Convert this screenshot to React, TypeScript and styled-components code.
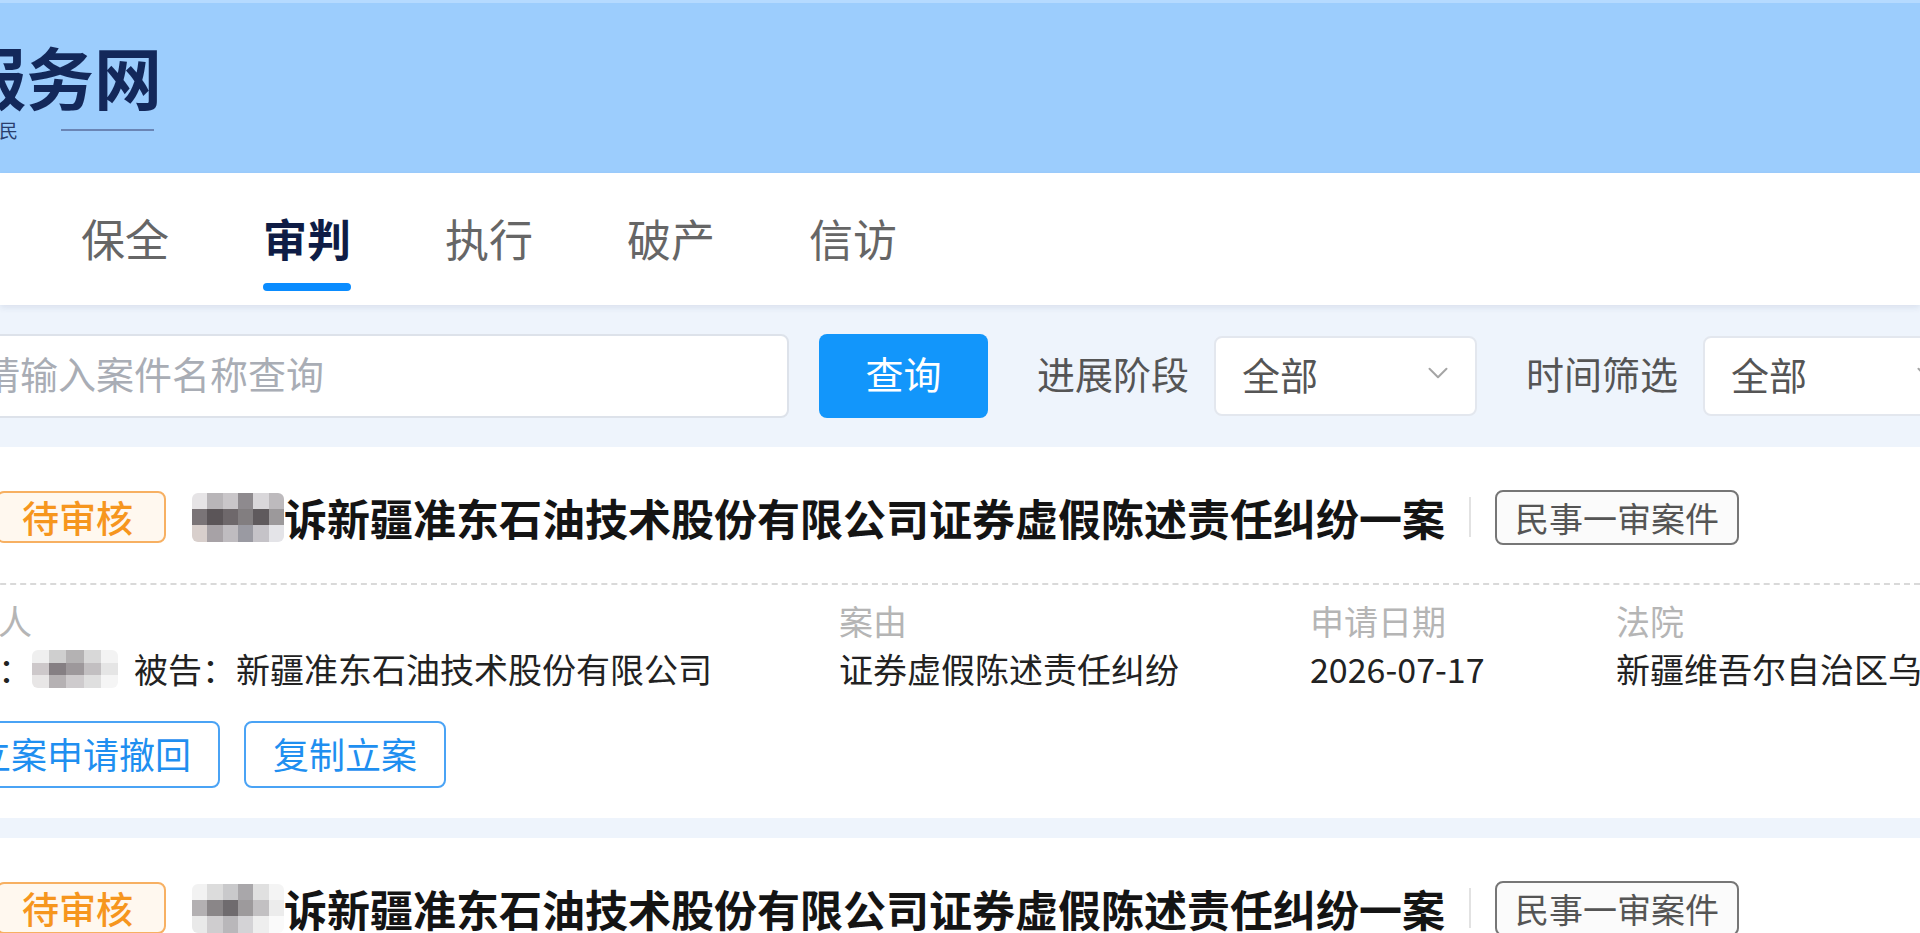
import styled, { createGlobalStyle } from 'styled-components';
import { ChevronDown } from 'lucide-react';

const GlobalStyle = createGlobalStyle`
  html, body {
    margin: 0;
    padding: 0;
  }
  body {
    background: #eef4fc;
    font-family: "Noto Sans CJK SC", "Noto Sans", sans-serif;
    overflow: hidden;
  }
  * {
    box-sizing: border-box;
  }
`;

const Page = styled.div`
  width: 1920px;
  height: 933px;
  overflow: hidden;
  background: #eef4fc;
`;

/* ---------- header ---------- */

const Header = styled.header`
  height: 173px;
  background: #9ccdfd;
  border-top: 3px solid #b5daff;
  padding-top: 36px;
  overflow: hidden;
`;

const Brand = styled.div`
  margin-left: -178px;
`;

const BrandName = styled.div`
  font-size: 68px;
  line-height: 74px;
  font-weight: 700;
  color: #13285a;
  white-space: nowrap;
`;

const Slogan = styled.div`
  display: flex;
  align-items: center;
  gap: 35px;
  margin-top: 6px;
  margin-left: 96px;
`;

const Motto = styled.span`
  font-size: 19px;
  line-height: 22px;
  letter-spacing: 8px;
  color: #2a3f6e;
`;

const Rule = styled.span`
  width: 93px;
  height: 2px;
  background: #6a85b5;
`;

/* ---------- tabs ---------- */

const Nav = styled.nav`
  position: relative;
  z-index: 1;
  height: 132px;
  display: flex;
  gap: 94px;
  padding-left: 81px;
  background: #fff;
  box-shadow: 0 3px 6px rgba(30, 60, 110, 0.09);
`;

const Tab = styled.div<{ $active?: boolean }>`
  position: relative;
  padding-top: 38px;
  font-size: 44px;
  line-height: 54px;
  font-weight: ${(p) => (p.$active ? 700 : 400)};
  color: ${(p) => (p.$active ? '#0e1c45' : '#666')};

  &::after {
    content: '';
    display: ${(p) => (p.$active ? 'block' : 'none')};
    position: absolute;
    left: 0;
    right: 0;
    bottom: 14px;
    height: 8px;
    border-radius: 4px;
    background: #0a8cff;
  }
`;

/* ---------- filters ---------- */

const FilterBar = styled.div`
  height: 142px;
  display: flex;
  align-items: center;
  margin-left: -42px;
  white-space: nowrap;
`;

const SearchInput = styled.input`
  width: 831px;
  height: 84px;
  flex-shrink: 0;
  padding: 0 22px 8px;
  border: 2px solid #dde2ea;
  border-radius: 8px;
  background: #fff;
  font-family: inherit;
  font-size: 38px;
  color: #333;
  outline: none;

  &::placeholder {
    color: #a9adb5;
  }
`;

const SearchButton = styled.button`
  width: 169px;
  height: 84px;
  flex-shrink: 0;
  margin-left: 30px;
  padding-bottom: 8px;
  border: none;
  border-radius: 8px;
  background: #1296fb;
  color: #fff;
  font-family: inherit;
  font-size: 38px;
`;

const FilterLabel = styled.span`
  flex-shrink: 0;
  margin-left: 49px;
  margin-right: 25px;
  padding-bottom: 8px;
  font-size: 38px;
  color: #555;
`;

const Select = styled.div`
  width: 263px;
  height: 80px;
  flex-shrink: 0;
  display: flex;
  align-items: center;
  justify-content: space-between;
  padding: 0 20px 6px 26px;
  border: 2px solid #e3e7ee;
  border-radius: 8px;
  background: #fff;
  font-size: 38px;
  color: #555;

  svg {
    color: #a5a5a5;
  }
`;

/* ---------- case cards ---------- */

const Card = styled.section`
  background: #fff;
  padding: 42px 0 30px;

  & + & {
    margin-top: 20px;
  }
`;

const CardInner = styled.div`
  margin-left: -70px;
`;

const HeadRow = styled.div`
  display: flex;
  align-items: center;
  padding-left: 66px;
  white-space: nowrap;
`;

const StatusTag = styled.span`
  height: 52px;
  display: flex;
  align-items: center;
  padding: 0 31px 0 24px;
  border: 2px solid #f7b062;
  border-radius: 8px;
  background: #fff8ef;
  color: #f6961e;
  font-size: 37px;
  font-weight: 500;
`;

const Mosaic = styled.span<{ $cols: number; $w: number; $h: number; $gap?: number }>`
  display: grid;
  grid-template-columns: repeat(${(p) => p.$cols}, 1fr);
  width: ${(p) => p.$w}px;
  height: ${(p) => p.$h}px;
  flex-shrink: 0;
  margin-left: ${(p) => p.$gap ?? 0}px;
  border-radius: 6px;
  overflow: hidden;
  filter: blur(0.7px);
`;

const Tile = styled.span<{ $c: string }>`
  background: ${(p) => p.$c};
`;

const CaseTitle = styled.h2`
  margin: 0;
  font-size: 43px;
  line-height: 56px;
  font-weight: 700;
  color: #141414;
`;

const Divider = styled.span`
  width: 2px;
  height: 40px;
  margin: 0 24px;
  background: #e2e2e2;
`;

const TypeTag = styled.span`
  height: 55px;
  display: flex;
  align-items: center;
  padding: 0 18px;
  border: 2px solid #767676;
  border-radius: 8px;
  background: #fbfbfb;
  color: #555;
  font-size: 34px;
`;

const Dashed = styled.div`
  margin-top: 38px;
  border-top: 2px dashed #d9d9d9;
`;

const InfoGrid = styled.div`
  display: grid;
  grid-template-columns: 909px 471px 306px 1fr;
  margin-top: 12px;
  white-space: nowrap;
  font-size: 34px;
  line-height: 48px;
`;

const InfoCell = styled.div`
  display: flex;
  flex-direction: column;
  min-width: 0;
`;

const InfoLabel = styled.span`
  color: #b5b5b5;
`;

const InfoValue = styled.span`
  display: flex;
  align-items: center;
  color: #222;
`;

const Party = styled.span`
  margin-left: 16px;
`;

const Actions = styled.div`
  display: flex;
  gap: 24px;
  margin-top: 28px;
  padding-left: 16px;
`;

const ActionButton = styled.button`
  height: 67px;
  padding: 0 27px 4px;
  border: 2px solid #4aa3f5;
  border-radius: 8px;
  background: #fff;
  color: #1f8ff0;
  font-family: inherit;
  font-size: 36px;
  white-space: nowrap;
`;

type Blur = { cols: number; w: number; h: number; tiles: string[] };

const titleBlurA: Blur = {
  cols: 6,
  w: 92,
  h: 49,
  tiles: [
    '#e6e4e6', '#b8b5b8', '#c9c6c9', '#8e8a8e', '#d9d7da', '#bdbabd',
    '#7a7477', '#5b5558', '#6e686b', '#827e80', '#5f5a5d', '#9c999b',
    '#d8cfcc', '#a7a2a6', '#bfbcc0', '#9a9aa2', '#c5c3c8', '#e4e4e8',
  ],
};

const titleBlurB: Blur = {
  cols: 6,
  w: 92,
  h: 49,
  tiles: [
    '#f2f2f2', '#dcdcdc', '#c9c9cb', '#a9a7aa', '#e0e0e0', '#f4f4f4',
    '#b3b0b2', '#8a8688', '#6f6b6e', '#9d9a9c', '#c2c0c2', '#ececec',
    '#e9e9e9', '#cfcdcf', '#b9b7ba', '#d4d3d6', '#eeeeee', '#fafafa',
  ],
};

const nameBlur: Blur = {
  cols: 5,
  w: 86,
  h: 38,
  tiles: [
    '#efefef', '#cfcfcf', '#b4b2b3', '#d8d8d8', '#f3f3f3',
    '#cdc8ca', '#857f83', '#9d989b', '#c2bfc1', '#e5e5e5',
    '#e8e6e6', '#b5b1b3', '#cecbcd', '#dfdfdf', '#f5f5f5',
  ],
};

const Pixelated = ({ blur, gap }: { blur: Blur; gap?: number }) => (
  <Mosaic $cols={blur.cols} $w={blur.w} $h={blur.h} $gap={gap}>
    {blur.tiles.map((c, i) => (
      <Tile key={i} $c={c} />
    ))}
  </Mosaic>
);

const tabs = ['保全', '审判', '执行', '破产', '信访'];

const CaseCard = ({ blur }: { blur: Blur }) => (
  <Card>
    <CardInner>
      <HeadRow>
        <StatusTag>待审核</StatusTag>
        <Pixelated blur={blur} gap={26} />
        <CaseTitle>诉新疆准东石油技术股份有限公司证券虚假陈述责任纠纷一案</CaseTitle>
        <Divider />
        <TypeTag>民事一审案件</TypeTag>
      </HeadRow>
      <Dashed />
      <InfoGrid>
        <InfoCell>
          <InfoLabel>当事人</InfoLabel>
          <InfoValue>
            原告：
            <Pixelated blur={nameBlur} />
            <Party>被告：新疆准东石油技术股份有限公司</Party>
          </InfoValue>
        </InfoCell>
        <InfoCell>
          <InfoLabel>案由</InfoLabel>
          <InfoValue>证券虚假陈述责任纠纷</InfoValue>
        </InfoCell>
        <InfoCell>
          <InfoLabel>申请日期</InfoLabel>
          <InfoValue>2026-07-17</InfoValue>
        </InfoCell>
        <InfoCell>
          <InfoLabel>法院</InfoLabel>
          <InfoValue>新疆维吾尔自治区乌鲁木齐市中级人民法院</InfoValue>
        </InfoCell>
      </InfoGrid>
      <Actions>
        <ActionButton>立案申请撤回</ActionButton>
        <ActionButton>复制立案</ActionButton>
      </Actions>
    </CardInner>
  </Card>
);

export default function App() {
  return (
    <Page>
      <GlobalStyle />
      <Header>
        <Brand>
          <BrandName>诉讼服务网</BrandName>
          <Slogan>
            <Motto>司法为民</Motto>
            <Rule />
          </Slogan>
        </Brand>
      </Header>
      <Nav>
        {tabs.map((t) => (
          <Tab key={t} $active={t === '审判'}>
            {t}
          </Tab>
        ))}
      </Nav>
      <FilterBar>
        <SearchInput placeholder="请输入案件名称查询" />
        <SearchButton>查询</SearchButton>
        <FilterLabel>进展阶段</FilterLabel>
        <Select>
          全部
          <ChevronDown size={34} strokeWidth={1.4} />
        </Select>
        <FilterLabel>时间筛选</FilterLabel>
        <Select>
          全部
          <ChevronDown size={34} strokeWidth={1.4} />
        </Select>
      </FilterBar>
      <CaseCard blur={titleBlurA} />
      <CaseCard blur={titleBlurB} />
    </Page>
  );
}
